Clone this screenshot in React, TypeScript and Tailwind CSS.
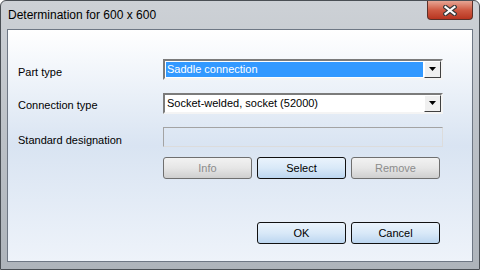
const FONT = "font-['Segoe_UI','Liberation_Sans','Noto_Sans',sans-serif]";

function Combo({ text, selected }: { text: string; selected?: boolean }) {
  return (
    <div className="flex h-[21px] w-[280px] border-2 border-t-[#7b7b7b] border-l-[#7b7b7b] border-b-[#f4f4f4] border-r-[#f4f4f4] bg-white">
      <div className="flex flex-1 items-center p-[1px]">
        <div
          className={
            selected
              ? 'flex h-full w-full items-center bg-[#3399ff] px-[1px] text-white'
              : 'flex h-full w-full items-center px-[1px] text-black'
          }
        >
          {text}
        </div>
      </div>
      <div className="flex w-[17px] items-center justify-center border border-t-white border-l-white border-b-[#404040] border-r-[#404040] bg-[#f0f0f0]">
        <svg width="7" height="4" viewBox="0 0 7 4">
          <path d="M0 0h7L3.5 4z" fill="#000" />
        </svg>
      </div>
    </div>
  );
}

function Btn({ label, disabled }: { label: string; disabled?: boolean }) {
  return (
    <div
      className={
        disabled
          ? 'flex h-[22px] w-[89px] items-center justify-center rounded-[3px] border border-[#6f6f6f] bg-gradient-to-b from-[#f2f2f2] via-[#e6e6e6] to-[#cfcfcf] text-[#8c8c8c]'
          : 'flex h-[22px] w-[89px] items-center justify-center rounded-[3px] border border-[#111] bg-gradient-to-b from-[#eaf3fc] via-[#d9e9f8] to-[#bcd6f0] text-black'
      }
    >
      {label}
    </div>
  );
}

export default function App() {
  return (
    <div className={`${FONT} h-[270px] w-[480px] overflow-hidden text-[11px]`}>
      <div className="flex h-full flex-col rounded-t-[6px] border border-[#4a4f55] bg-gradient-to-b from-[#cdd1d6] via-[#bcc1c7] to-[#aeb4bb] px-[6px] pb-[7px]">
        {/* title bar */}
        <div className="flex h-[28px] items-start">
          <div className="pt-[7px] pl-[1px] text-[12px] leading-[15px] text-black">Determination for 600 x 600</div>
          <div className="ml-auto flex h-[19px] w-[46px] items-center justify-center rounded-b-[4px] border border-t-0 border-[#5b3029] bg-gradient-to-b from-[#e6a594] via-[#cf5a43] to-[#b8341f]">
            <svg width="14" height="11" viewBox="0 0 14 11">
              <path d="M2.5 2l9 7M11.5 2l-9 7" stroke="#3a3a3a" strokeWidth="4.5" strokeLinecap="square" />
              <path d="M2.5 2l9 7M11.5 2l-9 7" stroke="#fff" strokeWidth="2.2" strokeLinecap="square" />
            </svg>
          </div>
        </div>

        {/* client area */}
        <div className="flex flex-1 flex-col border border-[#6e7784] bg-gradient-to-b from-[#ffffff] via-[#d9e4f2] to-[#eef3fa] pl-[10px] pt-[28px]">
          <div className="grid grid-cols-[145px_280px] items-center gap-y-[12px]">
            <div className="pt-[6px]">Part type</div>
            <Combo text="Saddle connection" selected />
            <div className="pt-[4px]">Connection type</div>
            <Combo text="Socket-welded, socket (52000)" />
            <div className="mt-[1px] pt-[5px]">Standard designation</div>
            <div className="mt-[1px] h-[20px] border border-t-[#a3a3a3] border-l-[#a3a3a3] border-b-[#dcdcdc] border-r-[#dcdcdc]" />
          </div>
          <div className="ml-[145px] mt-[9px] flex gap-[5px]">
            <Btn label="Info" disabled />
            <Btn label="Select" />
            <Btn label="Remove" disabled />
          </div>
          <div className="ml-[239px] mt-[43px] flex gap-[5px]">
            <Btn label="OK" />
            <Btn label="Cancel" />
          </div>
        </div>
      </div>
    </div>
  );
}
